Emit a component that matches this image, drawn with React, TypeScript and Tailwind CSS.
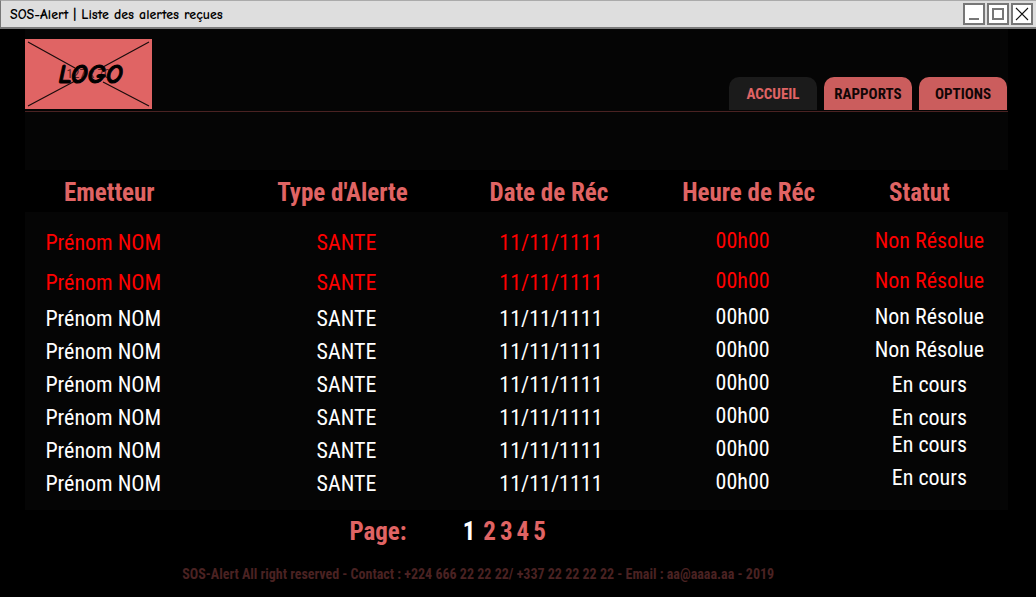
type Alert = {
  sender: string;
  kind: string;
  date: string;
  time: string;
  status: string;
  urgent?: boolean;
  statusAlign: string;
};

const base = { sender: "Prénom NOM", kind: "SANTE", date: "11/11/1111", time: "00h00" };

const alerts: Alert[] = [
  { ...base, status: "Non Résolue", urgent: true, statusAlign: "pb-1" },
  { ...base, status: "Non Résolue", urgent: true, statusAlign: "pb-1" },
  { ...base, status: "Non Résolue", statusAlign: "pb-1" },
  { ...base, status: "Non Résolue", statusAlign: "pb-1" },
  { ...base, status: "En cours", statusAlign: "align-middle" },
  { ...base, status: "En cours", statusAlign: "align-middle" },
  { ...base, status: "En cours", statusAlign: "align-top" },
  { ...base, status: "En cours", statusAlign: "align-top" },
];

const columns = [
  { label: "Emetteur", width: "w-[20%]", pad: "pr-7" },
  { label: "Type d'Alerte", width: "w-[25%]", pad: "pr-1" },
  { label: "Date de Réc", width: "w-[17%]", pad: "pr-1" },
  { label: "Heure de Réc", width: "w-[22%]", pad: "pl-3" },
  { label: "Statut", width: "w-[16%]", pad: "pr-5" },
];

const windowButton =
  "flex size-[22px] items-center justify-center border-2 border-[#777] bg-white";

function TitleBar() {
  return (
    <div className="flex h-[29px] items-center justify-between border-t border-b-2 border-l border-t-[#aaa] border-b-[#7a7a7a] border-l-[#777] bg-[#dedede] pr-[3px] pl-[9px]">
      <h1 className="font-['Comic_Neue','Comic_Sans_MS','Open_Sans',sans-serif] text-[14px] font-bold text-black">
        SOS-Alert | Liste des alertes reçues
      </h1>
      <div className="flex gap-[2px]">
        <button type="button" aria-label="Réduire" className={windowButton}>
          <svg viewBox="0 0 18 18" className="size-[18px] shrink-0" shapeRendering="crispEdges">
            <path d="M4 13h10v2H4z" fill="#777" />
          </svg>
        </button>
        <button type="button" aria-label="Agrandir" className={windowButton}>
          <svg viewBox="0 0 18 18" className="size-[18px] shrink-0" shapeRendering="crispEdges">
            <path d="M4 4h10v10H4z" fill="none" stroke="#777" strokeWidth="2" />
          </svg>
        </button>
        <button type="button" aria-label="Fermer" className={windowButton}>
          <svg viewBox="0 0 18 18" className="size-[18px] shrink-0">
            <path d="M3 3l12 12M15 3L3 15" fill="none" stroke="#111" strokeWidth="1.1" />
          </svg>
        </button>
      </div>
    </div>
  );
}

function Logo() {
  return (
    <div className="relative h-[70px] w-[127px] bg-[#e06464]">
      <svg viewBox="0 0 127 70" className="size-full" fill="none" stroke="#1a0c0c" strokeWidth="1.2">
        <path d="M3 3L50 29M78 28L124 3M78 43L124 67M50 42L3 67" />
      </svg>
      <span className="absolute inset-0 flex items-center justify-center text-[13px] text-[#5a2020]">
        127 x 70
      </span>
      <span className="absolute inset-0 flex items-center justify-center pt-0.5 pl-1 font-['Comic_Neue','Comic_Sans_MS','Liberation_Sans',sans-serif] text-[26px] font-bold text-black italic [-webkit-text-stroke:1px_black]">
        LOGO
      </span>
    </div>
  );
}

const tab =
  "flex h-[33px] w-[88px] items-center justify-center rounded-t-[10px] pt-0.5 text-[15px] font-bold";

export default function App() {
  return (
    <div className="flex min-h-screen flex-col bg-black font-['Roboto_Condensed','Liberation_Sans_Narrow','Liberation_Sans',sans-serif]">
      <TitleBar />
      <div className="flex grow flex-col pr-7 pl-[25px]">
        <header className="bg-[#050505] pb-[58px]">
          <div className="flex items-end justify-between border-b border-[#4a2222] pt-[10px] pb-[2px]">
            <Logo />
            <nav className="-mb-px flex gap-[7px] pr-px">
              <a href="#accueil" aria-current="page" className={`${tab} bg-[#1b1b1b] text-[#e06464]`}>
                ACCUEIL
              </a>
              <a href="#rapports" className={`${tab} bg-[#cb5d5d] text-[#120606]`}>
                RAPPORTS
              </a>
              <a href="#options" className={`${tab} bg-[#cb5d5d] text-[#120606]`}>
                OPTIONS
              </a>
            </nav>
          </div>
        </header>
        <main>
          <table className="w-full table-fixed bg-[#050505] text-center whitespace-nowrap">
            <thead className="bg-black">
              <tr className="h-[42px] text-[25px] leading-7 text-[#e06464]">
                {columns.map((c) => (
                  <th key={c.label} scope="col" className={`${c.width} ${c.pad} pt-1 text-center font-bold`}>
                    {c.label}
                  </th>
                ))}
              </tr>
            </thead>
            <tbody className="text-[22px] leading-[21px] before:block before:h-[10px] after:block after:h-[10px]">
              {alerts.map((a, i) => (
                <tr key={i} className={a.urgent ? "h-[40px] text-[#ff0000]" : "h-[33px] text-white"}>
                  <td className="pr-10">{a.sender}</td>
                  <td className="pl-1">{a.kind}</td>
                  <td>{a.date}</td>
                  <td className="pb-1">{a.time}</td>
                  <td className={a.statusAlign}>{a.status}</td>
                </tr>
              ))}
            </tbody>
          </table>
          <nav aria-label="Pagination" className="flex items-center pt-2 pl-[33%] text-[25px] leading-7 font-bold text-[#e06464]">
            <span className="pr-14">Page:</span>
            <a href="#page-1" aria-current="page" className="pr-2 text-white">
              1
            </a>
            <span className="flex gap-1">
              <a href="#page-2">2</a>
              <a href="#page-3">3</a>
              <a href="#page-4">4</a>
              <a href="#page-5">5</a>
            </span>
          </nav>
        </main>
        <footer className="mt-auto pb-[13px] pl-[16%] text-[14px] leading-5 font-bold text-[#4a2222]">
          SOS-Alert All right reserved - Contact : +224 666 22 22 22/ +337 22 22 22 22 - Email : aa@aaaa.aa - 2019
        </footer>
      </div>
    </div>
  );
}
